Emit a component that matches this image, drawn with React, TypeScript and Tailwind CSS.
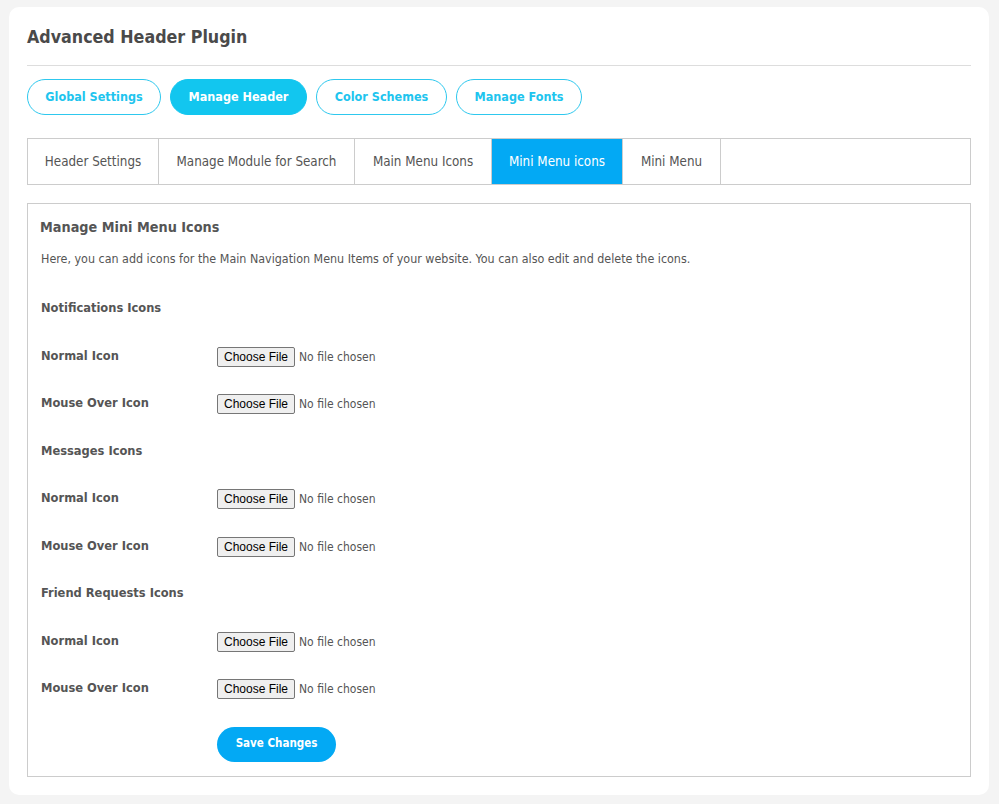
import React from "react";

const font = { fontFamily: '"DejaVu Sans Condensed", "DejaVu Sans", Tahoma, sans-serif' };

function FileInput() {
  return (
    <div className="mt-[3px] flex items-center gap-[4px]">
      <span
        className="inline-flex h-[20px] items-center rounded-[2px] border border-[#767676] bg-[#efefef] px-[6px] text-[12px] text-black"
        style={{ fontFamily: '"Liberation Sans", Arial, sans-serif' }}
      >
        Choose File
      </span>
      <span className="text-[12px] text-[#555]" style={font}>No file chosen</span>
    </div>
  );
}

function Row({ label }: { label: string }) {
  return (
    <div className="flex h-[47.5px] items-center">
      <div className="w-[176px] text-[12.75px] font-bold text-[#555]">{label}</div>
      <FileInput />
    </div>
  );
}

function Group({ title }: { title: string }) {
  return (
    <div className="flex h-[47.5px] items-center text-[12.75px] font-bold text-[#555]">{title}</div>
  );
}

export default function App() {
  const pills = [
    { t: "Global Settings", w: 134, active: false },
    { t: "Manage Header", w: 137, active: true },
    { t: "Color Schemes", w: 131, active: false },
    { t: "Manage Fonts", w: 126, active: false },
  ];
  const tabs = [
    { t: "Header Settings", w: 131 },
    { t: "Manage Module for Search", w: 196 },
    { t: "Main Menu Icons", w: 137 },
    { t: "Mini Menu icons", w: 131, active: true },
    { t: "Mini Menu", w: 98 },
  ];
  return (
    <div className="min-h-[804px] bg-[#f4f4f4] px-[9px] pt-[7px] pb-[9px]" style={font}>
      <div className="h-[788px] w-[980px] rounded-[10px] bg-white px-[18px] pt-[18px]">
        <h1 className="pb-[16px] text-[17.7px] font-bold leading-[24px] text-[#4a4a4a]">Advanced Header Plugin</h1>
        <div className="border-t border-[#dddddd]" />
        <div className="mt-[13px] flex gap-[9px]">
          {pills.map((p) => (
            <div
              key={p.t}
              className={
                p.active
                  ? "flex h-[36px] items-center justify-center rounded-full border border-[#12c6ef] bg-[#12c6ef] text-[12.5px] font-bold text-white"
                  : "flex h-[36px] items-center justify-center rounded-full border border-[#2ec8ee] bg-white text-[12.5px] font-bold text-[#20c4ee]"
              }
              style={{ width: p.w }}
            >
              {p.t}
            </div>
          ))}
        </div>
        <div className="mt-[23px] flex h-[47px] border border-[#cccccc]">
          {tabs.map((t) => (
            <div
              key={t.t}
              className={
                t.active
                  ? "flex items-center justify-center border-r border-[#cccccc] bg-[#03a9f4] text-[13.3px] text-white"
                  : "flex items-center justify-center border-r border-[#cccccc] text-[13.3px] text-[#555]"
              }
              style={{ width: t.w }}
            >
              {t.t}
            </div>
          ))}
        </div>
        <div className="mt-[18px] h-[574px] border border-[#cccccc] pl-[12px] pt-[14px]">
          <h2 className="text-[14.3px] font-bold leading-[18px] text-[#555]">Manage Mini Menu Icons</h2>
          <p className="mt-[15px] pl-[1px] text-[12.4px] leading-[16px] text-[#555]">
            Here, you can add icons for the Main Navigation Menu Items of your website. You can also edit and delete the icons.
          </p>
          <div className="mt-[17px] pl-[1px]">
            <Group title="Notifications Icons" />
            <Row label="Normal Icon" />
            <Row label="Mouse Over Icon" />
            <Group title="Messages Icons" />
            <Row label="Normal Icon" />
            <Row label="Mouse Over Icon" />
            <Group title="Friend Requests Icons" />
            <Row label="Normal Icon" />
            <Row label="Mouse Over Icon" />
          </div>
          <div className="mt-[15px] pl-[177px]">
            <div className="flex h-[35px] w-[119px] items-center justify-center rounded-full bg-[#03a9f4] text-[11.5px] font-bold text-white">
              Save Changes
            </div>
          </div>
        </div>
      </div>
    </div>
  );
}
